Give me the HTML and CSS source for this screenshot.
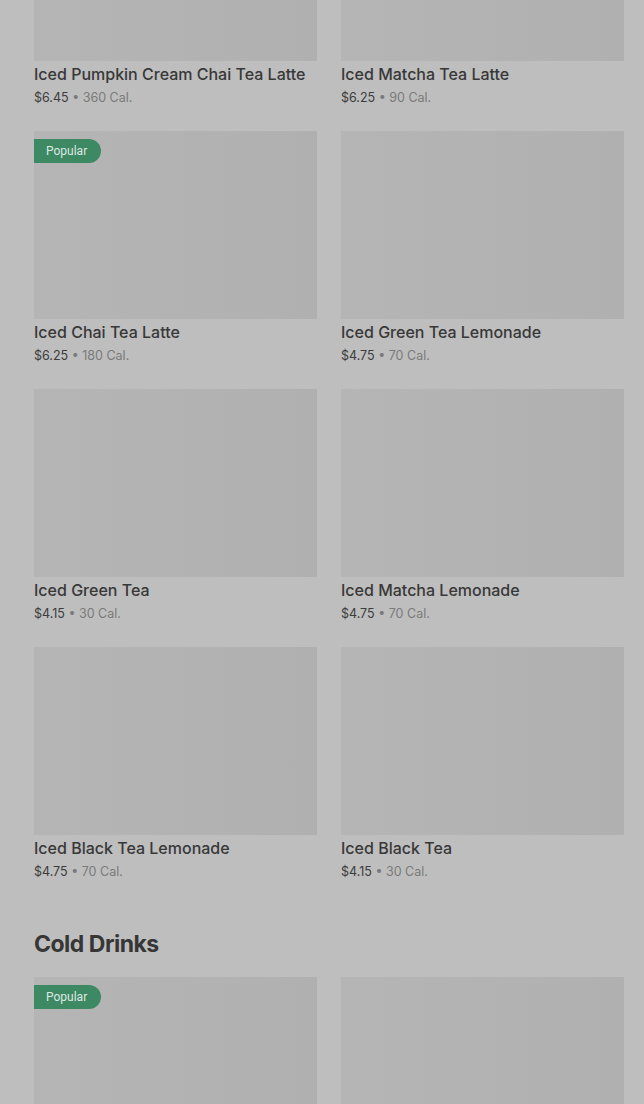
FILE: index.html
```html
<!DOCTYPE html>
<html>
<head>
<meta charset="utf-8">
<link rel="stylesheet" href="styles.css">
</head>
<body>
<main class="menu">
  <section class="section first">
    <div class="grid">
      <div class="card"><div class="thumb"></div><div class="name">Iced Pumpkin Cream Chai Tea Latte</div><div class="meta"><span class="price">$6.45</span> • 360 Cal.</div></div>
      <div class="card"><div class="thumb"></div><div class="name">Iced Matcha Tea Latte</div><div class="meta"><span class="price">$6.25</span> • 90 Cal.</div></div>
      <div class="card"><div class="thumb"><span class="badge">Popular</span></div><div class="name">Iced Chai Tea Latte</div><div class="meta"><span class="price">$6.25</span> • 180 Cal.</div></div>
      <div class="card"><div class="thumb"></div><div class="name">Iced Green Tea Lemonade</div><div class="meta"><span class="price">$4.75</span> • 70 Cal.</div></div>
      <div class="card"><div class="thumb"></div><div class="name">Iced Green Tea</div><div class="meta"><span class="price">$4.15</span> • 30 Cal.</div></div>
      <div class="card"><div class="thumb"></div><div class="name">Iced Matcha Lemonade</div><div class="meta"><span class="price">$4.75</span> • 70 Cal.</div></div>
      <div class="card"><div class="thumb"></div><div class="name">Iced Black Tea Lemonade</div><div class="meta"><span class="price">$4.75</span> • 70 Cal.</div></div>
      <div class="card"><div class="thumb"></div><div class="name">Iced Black Tea</div><div class="meta"><span class="price">$4.15</span> • 30 Cal.</div></div>
    </div>
  </section>
  <section class="section">
    <h2 class="heading">Cold Drinks</h2>
    <div class="grid">
      <div class="card"><div class="thumb"><span class="badge">Popular</span></div></div>
      <div class="card"><div class="thumb"></div></div>
    </div>
  </section>
</main>
</body>
</html>
```

FILE: styles.css
```css
html, body {
  margin: 0;
  padding: 0;
  background: #bebebe;
  overflow: hidden;
}
body {
  font-family: "Inter", "Roboto", "Liberation Sans", sans-serif;
  color: #383838;
}
.menu {
  padding: 0 20px 0 34px;
  margin-top: -127px;
}
.section.first {
  margin-bottom: 46px;
}
.grid {
  display: grid;
  grid-template-columns: 283px 283px;
  column-gap: 24px;
  row-gap: 23px;
}
.thumb {
  position: relative;
  height: 188px;
  background: linear-gradient(90deg, #b5b5b5 0%, #b0b0b0 100%);
}
.badge {
  position: absolute;
  left: 0;
  top: 8px;
  height: 24px;
  line-height: 24px;
  padding: 0 14px 0 12px;
  background: #3d8964;
  color: #dde8e2;
  font-size: 12px;
  font-family: "Roboto", "Inter", sans-serif;
  border-radius: 0 12px 12px 0;
}
.name {
  margin-top: 3px;
  font-size: 16px;
  font-weight: 500;
  line-height: 20px;
  color: #383838;
  white-space: nowrap;
}
.meta {
  margin-top: 4px;
  font-size: 12.5px;
  line-height: 20px;
  color: #7a7a7a;
}
.price {
  color: #3c3c3c;
}
.heading {
  margin: 0 0 17px;
  font-size: 23px;
  line-height: 32px;
  font-weight: 700;
  letter-spacing: -0.5px;
  color: #363636;
}
```
